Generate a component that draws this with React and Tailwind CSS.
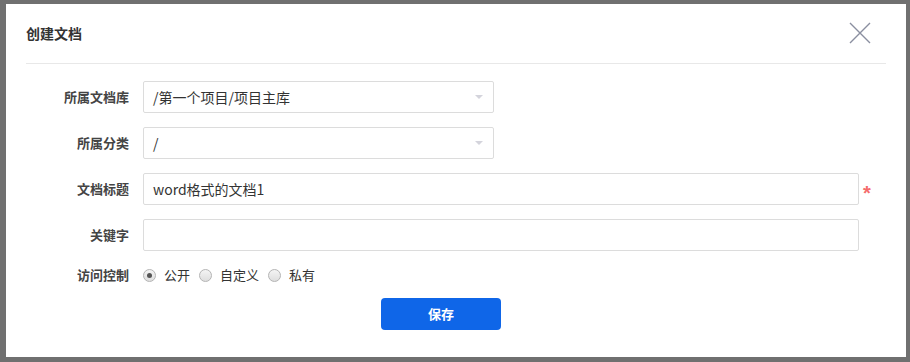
import React from 'react'

const font = { fontFamily: '"Noto Sans CJK SC", "Noto Sans", sans-serif' }

const Row = ({ label, children }) => (
  <div className="flex items-center h-8">
    <div className="w-[117px] shrink-0 pr-[14px] text-right text-[13px] font-bold text-[#444]">{label}</div>
    {children}
  </div>
)

const Select = ({ value }) => (
  <div className="w-[351px] h-8 border border-[#dcdcdc] rounded-[2px] flex items-center justify-between pl-[9px] pr-[10px] text-[14px] text-[#333]">
    <span>{value}</span>
    <svg width="8" height="4" viewBox="0 0 8 4"><path d="M0 0h8L4 4z" fill="#d4d4dc" /></svg>
  </div>
)

const Radio = ({ label, checked }) => (
  <label className="flex items-center mr-[9px]">
    <span className="w-[13px] h-[13px] rounded-full border border-[#b4b4b4] bg-gradient-to-b from-[#f4f4f4] to-[#dedede] flex items-center justify-center">
      {checked && <span className="w-[5px] h-[5px] rounded-full bg-[#555]" />}
    </span>
    <span className="ml-[8px] text-[13px] text-[#333]">{label}</span>
  </label>
)

export default function App() {
  return (
    <div className="w-[910px] h-[362px] bg-[#707070] pt-[4px] pl-[6px]" style={font}>
      <div className="w-[900px] h-[353px] bg-white px-5">
        <div className="h-[60px] border-b border-[#e8e8e8] flex items-center justify-between">
          <span className="text-[14px] font-bold text-[#333]">创建文档</span>
          <svg width="22" height="22" viewBox="0 0 22 22" className="mr-[15px] mt-[-2px]">
            <path d="M1 1L21 21M21 1L1 21" stroke="#8a8fa0" strokeWidth="1.4" />
          </svg>
        </div>
        <div className="pt-[17px] flex flex-col gap-[14px]">
          <Row label="所属文档库"><Select value="/第一个项目/项目主库" /></Row>
          <Row label="所属分类"><Select value="/" /></Row>
          <Row label="文档标题">
            <div className="w-[716px] h-8 border border-[#dcdcdc] rounded-[2px] flex items-center pl-[9px] text-[14px] text-[#333]">word格式的文档1</div>
            <span className="ml-[4px] text-[#f56c6c] text-[20px] font-bold leading-none mt-[8px]" style={{ fontFamily: '"Liberation Sans", sans-serif' }}>*</span>
          </Row>
          <Row label="关键字">
            <div className="w-[716px] h-8 border border-[#dcdcdc] rounded-[2px]" />
          </Row>
          <div className="flex items-center h-[18px] mt-[1px]">
            <div className="w-[117px] shrink-0 pr-[14px] text-right text-[13px] font-bold text-[#444]">访问控制</div>
            <Radio label="公开" checked />
            <Radio label="自定义" />
            <Radio label="私有" />
          </div>
        </div>
        <button className="mt-[14px] ml-[355px] w-[120px] h-8 rounded-[4px] bg-[#0f66e8] text-white text-[13px] font-bold">保存</button>
      </div>
    </div>
  )
}
